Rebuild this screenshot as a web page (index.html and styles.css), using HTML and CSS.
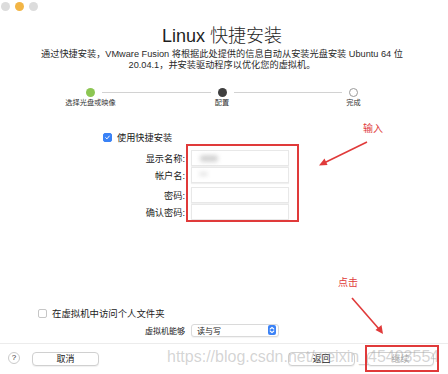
FILE: index.html
```html
<!DOCTYPE html>
<html lang="zh-CN">
<head>
<meta charset="utf-8">
<title>Linux 快捷安装</title>
<link rel="stylesheet" href="styles.css">
</head>
<body>
<div class="window">
  <div class="titlebar">
    <span class="light light-gray"></span>
    <span class="light light-yellow"></span>
    <span class="light light-gray"></span>
  </div>
  <main class="content">
    <h1 class="title">Linux 快捷安装</h1>
    <p class="desc">通过快捷安装，VMware Fusion 将根据此处提供的信息自动从安装光盘安装 Ubuntu 64 位<br>20.04.1，并安装驱动程序以优化您的虚拟机。</p>
    <div class="stepper">
      <div class="step"><span class="dot dot-done"></span><span class="step-label">选择光盘或映像</span></div>
      <span class="connector"></span>
      <div class="step"><span class="dot dot-current"></span><span class="step-label">配置</span></div>
      <span class="connector"></span>
      <div class="step"><span class="dot dot-todo"></span><span class="step-label">完成</span></div>
    </div>
    <div class="check-row easy-row">
      <span class="checkbox checked"><svg viewBox="0 0 10 10" width="9" height="9"><path d="M2.4 5.2 L4.2 7 L7.6 2.9" fill="none" stroke="#fff" stroke-width="1.4" stroke-linecap="round" stroke-linejoin="round"/></svg></span>
      <span>使用快捷安装</span>
    </div>
    <div class="fields">
      <div class="field-row"><span class="field-label">显示名称:</span><span class="input"><span class="smudge smudge-1"></span></span></div>
      <div class="field-row"><span class="field-label">帐户名:</span><span class="input"><span class="smudge smudge-2"></span></span></div>
      <div class="field-row gap-row"><span class="field-label">密码:</span><span class="input"></span></div>
      <div class="field-row"><span class="field-label">确认密码:</span><span class="input"></span></div>
    </div>
    <div class="sharing">
      <div class="check-row share-row">
        <span class="checkbox"></span>
        <span>在虚拟机中访问个人文件夹</span>
      </div>
      <div class="perm-row">
        <span class="field-label perm-label">虚拟机能够</span>
        <span class="select">读与写<span class="select-btn"><svg viewBox="0 0 8 10" width="8" height="10"><path d="M2.2 4 L4 2.3 L5.8 4 M2.2 6 L4 7.7 L5.8 6" fill="none" stroke="#fff" stroke-width="1.1" stroke-linecap="round" stroke-linejoin="round"/></svg></span></span>
      </div>
    </div>
  </main>
  <footer class="footer">
    <span class="help">?</span>
    <span class="btn cancel">取消</span>
    <span class="spacer"></span>
    <span class="btn back">返回</span>
    <span class="btn next">继续</span>
  </footer>

  <div class="watermark">https://blog.csdn.net/weixin_45403554</div>
  <div class="annot-box box-fields"></div>
  <div class="annot-box box-next"></div>
  <span class="annot-text text-input">输入</span>
  <span class="annot-text text-click">点击</span>
  <svg class="arrows" viewBox="0 0 448 374" width="448" height="374">
    <line x1="367" y1="142" x2="325" y2="162.5" stroke="#e03a3a" stroke-width="1.6"/>
    <polygon points="319,165.5 324.5,158.5 327.5,165" fill="#e03a3a"/>
    <line x1="352" y1="298" x2="379" y2="329" stroke="#e03a3a" stroke-width="1.6"/>
    <polygon points="383,334 375.5,330 381.5,325" fill="#e03a3a"/>
  </svg>
</div>
</body>
</html>
```

FILE: styles.css
```css
* { box-sizing: border-box; }

html, body {
  margin: 0;
  padding: 0;
  background: #ffffff;
}

.window {
  position: relative;
  width: 448px;
  height: 374px;
  display: flex;
  flex-direction: column;
  background: #ffffff;
  font-family: "Liberation Sans", "Noto Sans CJK SC", sans-serif;
  color: #222;
  overflow: hidden;
}

.titlebar {
  display: flex;
  gap: 5px;
  padding: 2px 0 0 1px;
  height: 11px;
  flex: none;
}

.light {
  width: 9px;
  height: 9px;
  border-radius: 50%;
  background: #dcdcdc;
}

.light-yellow { background: #f2b545; }

.content {
  flex: 1;
  display: flex;
  flex-direction: column;
  padding-right: 4px;
}

.title {
  margin: 14px 0 0;
  font-size: 18px;
  line-height: 23px;
  font-weight: 300;
  text-align: center;
  color: #1e1e1e;
}

.desc {
  margin: 1px 0 0;
  font-size: 9.2px;
  line-height: 11px;
  text-align: center;
  color: #2a2a2a;
}

.stepper {
  display: flex;
  margin: 17px 0 0 86px;
  width: 272px;
}

.step {
  width: 9px;
  display: flex;
  flex-direction: column;
  align-items: center;
}

.dot {
  width: 9px;
  height: 9px;
  border-radius: 50%;
  flex: none;
}

.dot-done { background: #8dc653; }
.dot-current { background: #3f3f3f; }
.dot-todo { background: #fff; border: 1px solid #9a9a9a; }

.step-label {
  margin-top: 2px;
  font-size: 7.2px;
  line-height: 8px;
  white-space: nowrap;
  color: #333;
}

.connector {
  flex: 1;
  height: 1px;
  margin: 4px 7px 0;
  background: #d2d2d2;
}

.check-row {
  display: flex;
  align-items: center;
  gap: 5px;
  height: 10px;
  font-size: 9.2px;
  color: #222;
}

.easy-row { margin: 25px 0 0 103px; }

.checkbox {
  width: 9px;
  height: 9px;
  border-radius: 2px;
  border: 1px solid #c6c6c6;
  background: #fff;
  display: flex;
  align-items: center;
  justify-content: center;
  flex: none;
}

.checkbox.checked {
  background: #3a82f6;
  border-color: #3a82f6;
}

.fields {
  margin: 8px 0 0 103px;
  display: flex;
  flex-direction: column;
  gap: 1px;
}

.field-row {
  display: flex;
  align-items: center;
  gap: 6px;
  height: 16px;
}

.field-row.gap-row { margin-top: 3px; }

.field-label {
  width: 82px;
  text-align: right;
  font-size: 9.2px;
  color: #222;
  white-space: nowrap;
}

.input {
  position: relative;
  width: 98px;
  height: 16px;
  background: #fff;
  border: 1px solid #e8e8e8;
  box-shadow: 0 1px 1px rgba(0, 0, 0, 0.06);
}

.smudge {
  position: absolute;
  background: #c9c9c9;
  filter: blur(2px);
  border-radius: 3px;
}

.smudge-1 { left: 8px; top: 4px; width: 18px; height: 7px; opacity: 0.8; }
.smudge-2 { left: 7px; top: 4px; width: 9px; height: 4px; opacity: 0.5; }

.sharing {
  margin-top: auto;
  padding-bottom: 6px;
  display: flex;
  flex-direction: column;
}

.share-row {
  margin-left: 38px;
  gap: 5px;
  font-size: 9.4px;
}

.perm-row {
  display: flex;
  align-items: center;
  gap: 6px;
  margin: 5px 0 0 103px;
  height: 14px;
}

.perm-label { font-size: 8px; }

.select {
  display: flex;
  align-items: center;
  justify-content: space-between;
  width: 88px;
  height: 13px;
  padding: 0 2px 0 5px;
  background: #fff;
  border: 1px solid #dadada;
  border-radius: 3px;
  box-shadow: 0 1px 1px rgba(0, 0, 0, 0.05);
  font-size: 8px;
  color: #222;
}

.select-btn {
  width: 8px;
  height: 10px;
  border-radius: 2px;
  background: #3b82f6;
  display: flex;
}

.footer {
  flex: none;
  height: 31px;
  border-top: 1px solid #ececec;
  display: flex;
  align-items: flex-start;
  padding: 8px 14px 0 8px;
}

.help {
  width: 12px;
  height: 12px;
  border-radius: 50%;
  border: 1px solid #cbcbcb;
  font-size: 8px;
  line-height: 10px;
  text-align: center;
  color: #333;
  margin-right: 12px;
}

.btn {
  width: 67px;
  height: 14px;
  border: 1px solid #d0d0d0;
  border-radius: 4px;
  background: #fff;
  box-shadow: 0 1px 1px rgba(0, 0, 0, 0.06);
  font-size: 9px;
  line-height: 12px;
  text-align: center;
  color: #222;
}

.spacer { flex: 1; }

.btn.next {
  margin-left: 12px;
  color: #a8a8a8;
}

.watermark {
  position: absolute;
  left: 167px;
  top: 349px;
  font-family: "Liberation Sans", sans-serif;
  font-size: 16px;
  line-height: 16px;
  color: rgba(160, 160, 160, 0.45);
  white-space: nowrap;
}

.annot-box {
  position: absolute;
  border: 2px solid #e03a3a;
}

.box-fields { left: 186px; top: 144px; width: 113px; height: 78px; }
.box-next { left: 365px; top: 345px; width: 74px; height: 27px; }

.annot-text {
  position: absolute;
  font-family: "Noto Sans CJK SC", sans-serif;
  font-size: 10px;
  line-height: 12px;
  color: #e03a3a;
}

.text-input { left: 363px; top: 122px; }
.text-click { left: 338px; top: 276px; }

.arrows {
  position: absolute;
  left: 0;
  top: 0;
  pointer-events: none;
}
```
